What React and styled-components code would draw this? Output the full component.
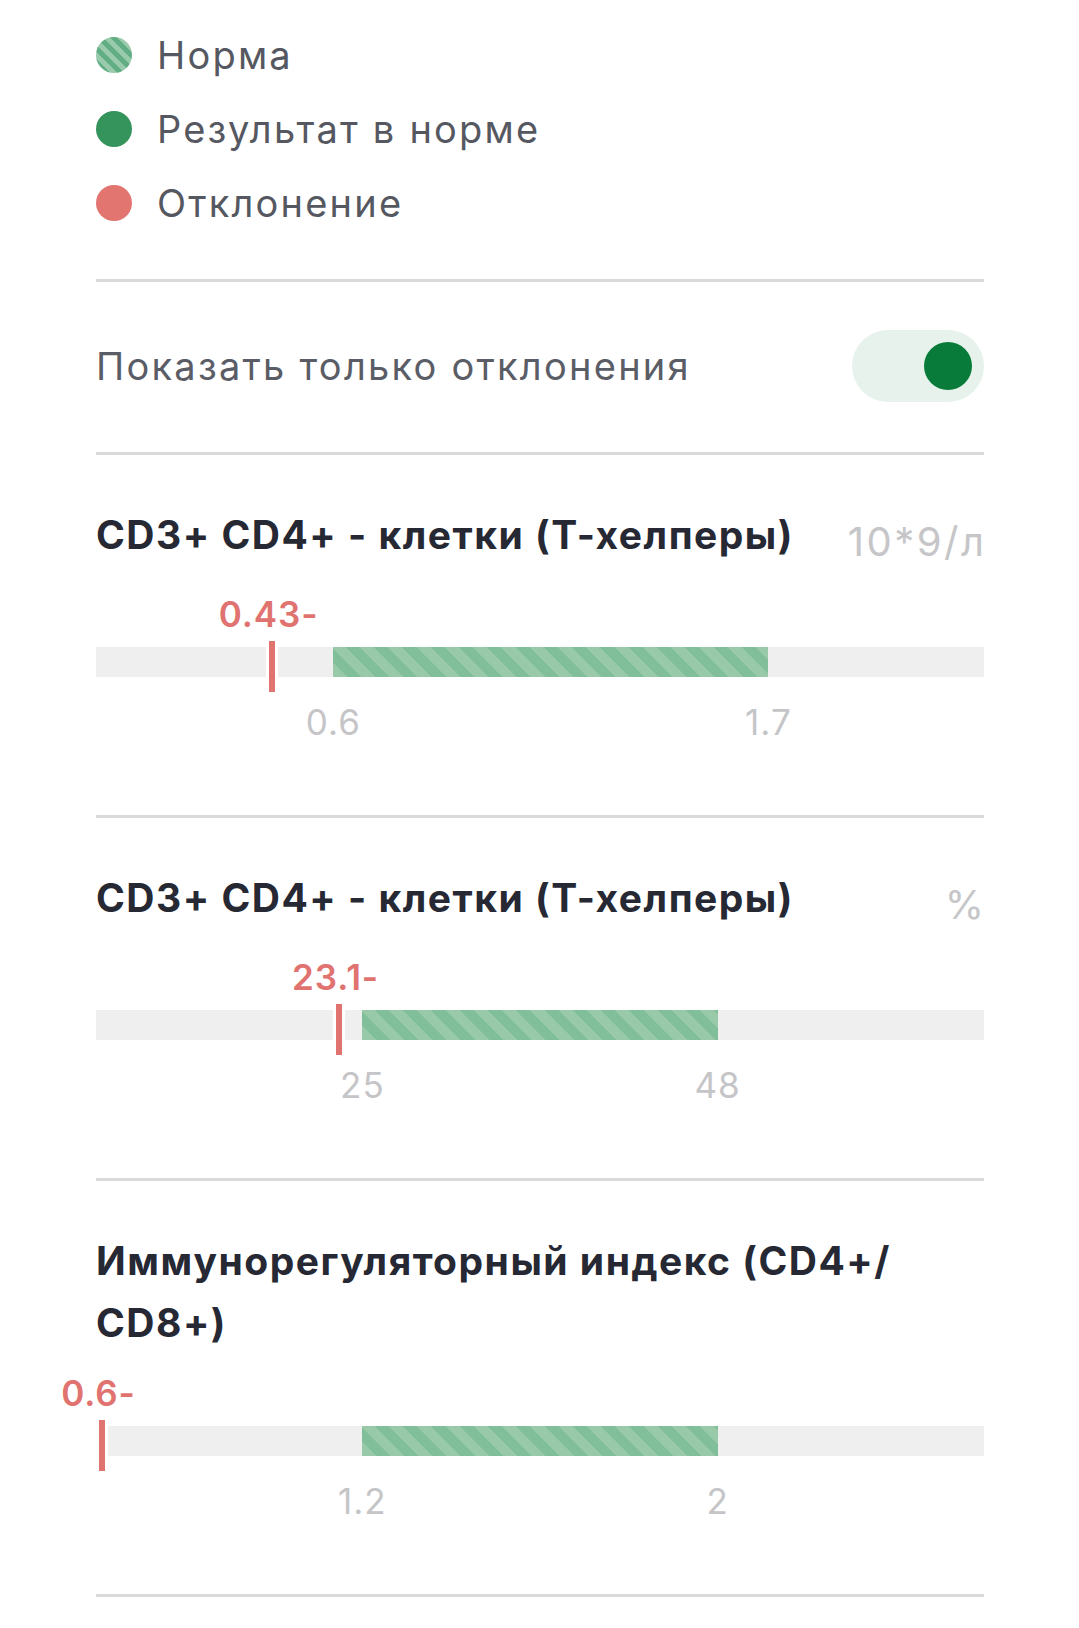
import React from "react";
import styled, { createGlobalStyle } from "styled-components";

const GlobalStyle = createGlobalStyle`
  html, body { margin: 0; padding: 0; background: #ffffff; }
  body { font-family: Inter, "Noto Sans", "Liberation Sans", sans-serif; }
  * { box-sizing: border-box; }
`;

const Page = styled.div`
  width: 1079px;
  padding: 18px 95px 0 96px;
`;

const Legend = styled.ul`
  list-style: none;
  margin: 0;
  padding: 0 0 39px;
`;

const LegendRow = styled.li`
  display: flex;
  align-items: center;
  gap: 25px;
  height: 74px;
  font-size: 38px;
  letter-spacing: 2.2px;
  color: #565861;
`;

const Dot = styled.span`
  flex: none;
  width: 36px;
  height: 36px;
  border-radius: 50%;
  background: ${(p) =>
    p.$kind === "norm"
      ? "repeating-linear-gradient(45deg, #99caab 0 5px, #62ae84 5px 10px)"
      : p.$kind === "ok"
      ? "#35935c"
      : "#e27570"};
`;

const Divider = styled.hr`
  margin: 0;
  border: 0;
  height: 3px;
  background: #dadada;
`;

const ToggleRow = styled.div`
  display: flex;
  align-items: center;
  justify-content: space-between;
  padding: 48px 0 50px;
`;

const ToggleLabel = styled.span`
  font-size: 38px;
  letter-spacing: 2.25px;
  color: #5b5d66;
`;

const Switch = styled.button`
  width: 132px;
  height: 72px;
  border: 0;
  border-radius: 36px;
  background: #e6f2eb;
  display: flex;
  align-items: center;
  justify-content: ${(p) => (p.$on ? "flex-end" : "flex-start")};
  padding: 0 12px;
`;

const Knob = styled.span`
  width: 48px;
  height: 48px;
  border-radius: 50%;
  background: #087a3a;
`;

const Section = styled.section`
  padding: 49px 0 69px;
`;

const Header = styled.div`
  display: flex;
  align-items: flex-start;
  justify-content: space-between;
  gap: 40px;
`;

const Title = styled.h3`
  margin: 0;
  font-size: 39px;
  line-height: 62px;
  font-weight: 700;
  letter-spacing: 1.5px;
  color: #262833;
`;

const Unit = styled.span`
  flex: none;
  padding-top: 5px;
  margin-right: -2.5px;
  font-size: 40px;
  line-height: 66px;
  letter-spacing: 2.5px;
  color: #c6c6c9;
  white-space: nowrap;
`;

const ValueRow = styled.div`
  position: relative;
  margin-top: 15px;
  height: 48px;
`;

const ValueLabel = styled.span`
  position: absolute;
  top: 0;
  transform: translateX(calc(-50% + 2.5px));
  font-size: 35px;
  line-height: 48px;
  font-weight: 600;
  letter-spacing: 0.9px;
  color: #e0736f;
  white-space: nowrap;
`;

const Track = styled.div`
  position: relative;
  margin-top: 9px;
  height: 30px;
  background: #efefef;
`;

const NormRange = styled.div`
  position: absolute;
  top: 0;
  bottom: 0;
  background: repeating-linear-gradient(
    45deg,
    #98c9a9 0 10px,
    #80bf99 10px 20px
  );
`;

const Tick = styled.div`
  position: absolute;
  top: -6px;
  width: 12px;
  height: 51px;
  background: #e0736f;
  border-left: 3px solid #ffffff;
  border-right: 3px solid #ffffff;
`;

const AxisRow = styled.div`
  position: relative;
  margin-top: 21px;
  height: 48px;
`;

const AxisLabel = styled.span`
  position: absolute;
  top: 0;
  transform: translateX(-50%);
  font-size: 35px;
  line-height: 48px;
  letter-spacing: 1px;
  color: #c5c5c8;
  white-space: nowrap;
`;

const legend = [
  { kind: "norm", label: "Норма" },
  { kind: "ok", label: "Результат в норме" },
  { kind: "bad", label: "Отклонение" },
];

const items = [
  {
    title: "CD3+ CD4+ - клетки (Т-хелперы)",
    unit: "10*9/л",
    min: 0,
    max: 2.245,
    low: 0.6,
    high: 1.7,
    value: 0.43,
    lowText: "0.6",
    highText: "1.7",
  },
  {
    title: "CD3+ CD4+ - клетки (Т-хелперы)",
    unit: "%",
    min: 7.75,
    max: 65.25,
    low: 25,
    high: 48,
    value: 23.1,
    lowText: "25",
    highText: "48",
  },
  {
    title: (
      <>
        Иммунорегуляторный индекс (CD4+/<wbr />CD8+)
      </>
    ),
    unit: null,
    min: 0.6,
    max: 2.6,
    low: 1.2,
    high: 2,
    value: 0.6,
    lowText: "1.2",
    highText: "2",
  },
];

const pct = (v, min, max) => `${((v - min) / (max - min)) * 100}%`;

function Indicator({ item }) {
  const { min, max } = item;
  const lowP = ((item.low - min) / (max - min)) * 100;
  const highP = ((item.high - min) / (max - min)) * 100;
  return (
    <Section>
      <Header>
        <Title>{item.title}</Title>
        {item.unit && <Unit>{item.unit}</Unit>}
      </Header>
      <ValueRow>
        <ValueLabel style={{ left: pct(item.value, min, max) }}>
          {item.value}-
        </ValueLabel>
      </ValueRow>
      <Track>
        <NormRange style={{ left: `${lowP}%`, width: `${highP - lowP}%` }} />
        <Tick style={{ left: pct(item.value, min, max) }} />
      </Track>
      <AxisRow>
        <AxisLabel style={{ left: `${lowP}%` }}>{item.lowText}</AxisLabel>
        <AxisLabel style={{ left: `${highP}%` }}>{item.highText}</AxisLabel>
      </AxisRow>
    </Section>
  );
}

export default function App() {
  return (
    <>
      <GlobalStyle />
      <Page>
        <Legend>
          {legend.map((l) => (
            <LegendRow key={l.kind}>
              <Dot $kind={l.kind} />
              {l.label}
            </LegendRow>
          ))}
        </Legend>
        <Divider />
        <ToggleRow>
          <ToggleLabel>Показать только отклонения</ToggleLabel>
          <Switch $on type="button" aria-pressed="true">
            <Knob />
          </Switch>
        </ToggleRow>
        <Divider />
        {items.map((it, i) => (
          <React.Fragment key={i}>
            <Indicator item={it} />
            <Divider />
          </React.Fragment>
        ))}
      </Page>
    </>
  );
}
